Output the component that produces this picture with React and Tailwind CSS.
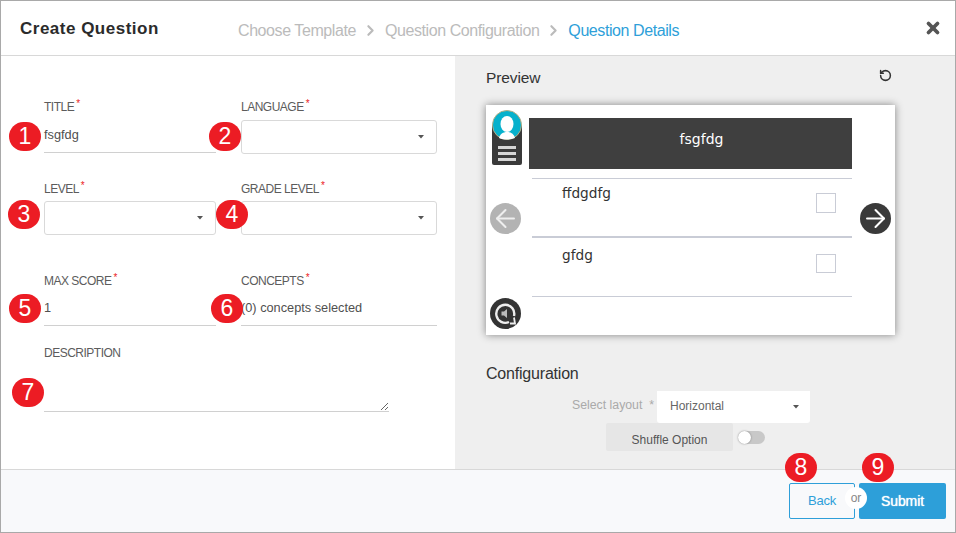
import React from 'react';
import { ChevronRight, X, RotateCcw, ArrowLeft, ArrowRight } from 'lucide-react';

const sans = 'font-["Liberation_Sans",Arial,sans-serif]';

function Badge({ n, className }) {
  return (
    <div className={`absolute w-[32px] h-[29px] rounded-full bg-[#ec1c24] text-white text-[23px] leading-[29px] text-center ${className}`}>
      {n}
    </div>
  );
}

function Label({ children, required }) {
  return (
    <div className="h-[14px] text-[12px] leading-[14px] text-[#5c5c5c] tracking-[-0.5px] whitespace-nowrap">
      {children}
      {required && <span className="relative -top-[4px] ml-[2px] text-[#ec1c24] text-[10px]">*</span>}
    </div>
  );
}

function Caret() {
  return (
    <svg width="6" height="4" viewBox="0 0 6 4">
      <path d="M0 0h6L3 3.500z" fill="#555" />
    </svg>
  );
}

function SelectBox({ className = '' }) {
  return (
    <div className={`h-[34px] bg-white border border-[#d9d9d9] rounded-[3px] flex items-center justify-end pr-[12px] ${className}`}>
      <Caret />
    </div>
  );
}

function TextField({ value }) {
  return (
    <div className="h-[33px] border-b border-[#d0d0d0] text-[12.75px] leading-[30px] text-[#505050] whitespace-nowrap">
      {value}
    </div>
  );
}

function OptionRow({ text, height, border, top, boxH, textTop }) {
  return (
    <div className={`flex justify-between ${height} ${border} border-[#c9ccd6] pl-[30px] pr-[16px]`}>
      <div className={`font-['DejaVu_Sans',sans-serif] text-[13.7px] leading-[16px] text-[#333] ${textTop}`}>{text}</div>
      <div className={`w-[20px] ${boxH} ${top} border border-[#c9ccd6] bg-white`} />
    </div>
  );
}

function RoundBtn({ children, className = '' }) {
  return (
    <div className={`w-[31px] h-[31px] rounded-full flex items-center justify-center ${className}`}>
      {children}
    </div>
  );
}

export default function App() {
  return (
    <div className={`${sans} w-[956px] h-[533px] border border-[#a9a9a9] bg-white flex flex-col overflow-hidden`}>
      {/* header */}
      <div className="h-[55px] shrink-0 border-b border-[#d8d8d8] flex items-center pl-[19px] pr-[15px]">
        <h1 className="w-[218px] mt-[1px] text-[17px] font-bold tracking-[0.5px] text-[#2b2b2b]">Create Question</h1>
        <div className="flex items-center mt-[5px] text-[16px] tracking-[-0.42px] text-[#bbb]">
          <span>Choose Template</span>
          <ChevronRight className="w-[17px] h-[17px] mx-[6px] text-[#bbb]" strokeWidth={3} />
          <span>Question Configuration</span>
          <ChevronRight className="w-[17px] h-[17px] mx-[6px] text-[#bbb]" strokeWidth={3} />
          <span className="text-[#2e9fd9]">Question Details</span>
        </div>
        <X className="ml-auto w-[18px] h-[18px] -mr-[2px] text-[#555]" strokeWidth={5} />
      </div>

      {/* body */}
      <div className="flex flex-1 min-h-0">
        <div className="w-[454px] pl-[43px] pt-[44px]">
          <div className="grid grid-cols-[172px_196px] gap-x-[25px]">
            <div className="relative">
              <Label required>TITLE</Label>
              <div className="mt-[6px]"><TextField value="fsgfdg" /></div>
              <Badge n="1" className="-left-[35px] top-[22px]" />
            </div>
            <div className="relative">
              <Label required>LANGUAGE</Label>
              <SelectBox className="mt-[6px]" />
              <Badge n="2" className="-left-[32px] top-[22px]" />
            </div>
            <div className="relative mt-[28px]">
              <Label required>LEVEL</Label>
              <SelectBox className="mt-[5px]" />
              <Badge n="3" className="-left-[36px] top-[18px]" />
            </div>
            <div className="relative mt-[28px]">
              <Label required>GRADE LEVEL</Label>
              <SelectBox className="mt-[5px]" />
              <Badge n="4" className="-left-[25px] top-[18px]" />
            </div>
            <div className="relative mt-[39px]">
              <Label required>MAX SCORE</Label>
              <div className="mt-[5px]"><TextField value="1" /></div>
              <Badge n="5" className="-left-[35px] top-[20px]" />
            </div>
            <div className="relative mt-[39px]">
              <Label required>CONCEPTS</Label>
              <div className="mt-[5px]"><TextField value="(0) concepts selected" /></div>
              <Badge n="6" className="-left-[30px] top-[20px]" />
            </div>
          </div>
          <div className="relative mt-[20px] w-[345px]">
            <Label>DESCRIPTION</Label>
            <textarea className="block w-full h-[52px] border-b border-[#d0d0d0] outline-none" readOnly />
            <Badge n="7" className="-left-[32px] top-[32px]" />
          </div>
        </div>

        <div className="flex-1 bg-[#efefef] pl-[31px]">
          <div className="w-[409px] flex items-center justify-between h-[42px] pt-[2px]">
            <h2 className="text-[15.5px] tracking-[-0.1px] text-[#333]">Preview</h2>
            <RotateCcw className="w-[13px] h-[13px] mr-[3px] -mt-[6px] text-[#333]" strokeWidth={2.8} />
          </div>

          {/* question preview card */}
          <div className="mt-[7px] w-[409px] h-[230px] bg-white shadow-[0_0_8px_rgba(0,0,0,0.45)] flex">
            <div className="w-[43px] pl-[4px] pt-[5px] pb-[6px] flex flex-col">
              <div className="relative ml-[2px] w-[30px] h-[55px]">
                <div className="absolute left-0 right-0 top-[15px] bottom-0 bg-[#3a3a3a] rounded-b-[2px]" />
                <svg className="absolute left-0 top-0" width="30" height="30" viewBox="0 0 30 30">
                  <circle cx="15" cy="15" r="14.500" fill="#07b1cc" stroke="#b6ad84" strokeWidth="1" />
                  <ellipse cx="15" cy="14" rx="6.500" ry="8" fill="#fff" />
                  <path d="M7 28c1-4 4-6 8-6s7 2 8 6c-5 2-11 2-16 0z" fill="#fff" />
                </svg>
                <div className="absolute left-[6px] top-[36px] w-[18px] flex flex-col gap-[3px]">
                  <div className="h-[3px] bg-[#d5d5d5]" />
                  <div className="h-[3px] bg-[#d5d5d5]" />
                  <div className="h-[3px] bg-[#d5d5d5]" />
                </div>
              </div>
              <RoundBtn className="mt-[38px] bg-[#b3b3b3]">
                <ArrowLeft className="w-[29px] h-[29px] text-[#eee]" strokeWidth={1.7} />
              </RoundBtn>
              <RoundBtn className="mt-auto bg-[#333]">
                <svg width="23" height="23" viewBox="0 0 23 23" fill="none">
                  <path d="M15 20A9 9 0 1 1 20 14" stroke="#eee" strokeWidth="2.400" />
                  <path d="M16 21.500h5l-1-6" stroke="#eee" strokeWidth="1.800" />
                  <path d="M7.500 9.500h2.500L13 7v9l-3-2.500H7.500z" fill="#bbb" />
                </svg>
              </RoundBtn>
            </div>

            <div className="w-[323px] pt-[13px]">
              <div className="h-[51px] bg-[#3f3f3f] text-white text-center font-['DejaVu_Sans',sans-serif] text-[14px] leading-[16px] pt-[13px] pl-[22px]">fsgfdg</div>
              <div className="mt-[9px] ml-[3px]">
                <OptionRow text="ffdgdfg" height="h-[60px]" border="border-t border-b-2" top="mt-[14px]" boxH="h-[20px]" textTop="pt-[6px]" />
                <OptionRow text="gfdg" height="h-[59px]" border="border-b" top="mt-[16px]" boxH="h-[19px]" textTop="pt-[9px]" />
              </div>
            </div>

            <div className="pl-[8px] pt-[98px]">
              <RoundBtn className="bg-[#3a3a3a]">
                <ArrowRight className="w-[29px] h-[29px] text-white" strokeWidth={1.7} />
              </RoundBtn>
            </div>
          </div>

          <h2 className="mt-[30px] text-[16px] leading-[18px] tracking-[-0.2px] text-[#333]">Configuration</h2>
          <div className="mt-[8px] h-[32px] flex items-center">
            <div className="w-[171px] -mt-[3px] text-right pr-[3px] text-[12.3px] text-[#aaa] whitespace-nowrap">
              Select layout&nbsp; *
            </div>
            <div className="w-[153px] h-[32px] bg-white rounded-b-[3px] flex items-center justify-between pl-[13px] pr-[11px] text-[12px] text-[#666]">
              <span className="-mt-[2px]">Horizontal</span>
              <Caret />
            </div>
          </div>
          <div className="flex items-start">
            <div className="ml-[120px] w-[127px] h-[28px] bg-[#e6e6e6] rounded-[2px] text-[12px] leading-[34px] text-center text-[#555]">Shuffle Option</div>
            <div className="relative ml-[5px] mt-[8px] w-[27px] h-[13px] rounded-full bg-[#c8c8c8]">
              <div className="absolute left-0 top-0 w-[13px] h-[13px] rounded-full bg-white shadow-[0_0_2px_rgba(0,0,0,0.4)]" />
            </div>
          </div>
        </div>
      </div>

      {/* footer */}
      <div className="relative h-[63px] shrink-0 border-t border-[#d8d8d8] bg-[#f8f9fb] flex justify-end items-start pt-[13px] pr-[9px]">
        <button className="w-[66px] h-[36px] border border-[#2e9fd9] rounded-[2px] text-[13px] tracking-[-0.2px] text-[#2e9fd9]">Back</button>
        <button className="ml-[4px] w-[87px] h-[36px] bg-[#2d9fd9] rounded-[2px] text-[14px] font-normal tracking-[-0.1px] [text-shadow:0_0_1px_#fff] text-white">Submit</button>
        <div className="absolute right-[88px] top-[17px] w-[22px] h-[22px] rounded-full bg-white text-[12px] leading-[22px] text-center text-[#888]">or</div>
        <Badge n="8" className="right-[138px] -top-[17px]" />
        <Badge n="9" className="right-[61px] -top-[17px]" />
      </div>
    </div>
  );
}
